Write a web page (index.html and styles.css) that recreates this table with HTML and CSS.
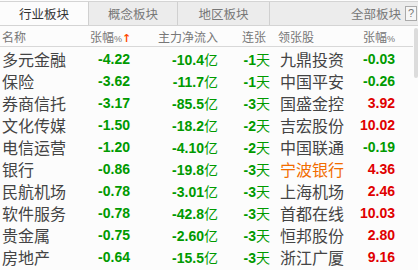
FILE: index.html
```html
<!DOCTYPE html>
<html lang="zh">
<head>
<meta charset="utf-8">
<link rel="stylesheet" href="styles.css">
</head>
<body>
<div class="panel">
  <div class="tabs">
    <div class="tab active">行业板块</div>
    <div class="tab">概念板块</div>
    <div class="tab">地区板块</div>
    <div class="tab-rest">
      <span class="all">全部板块</span>
      <span class="help">?</span>
    </div>
  </div>
  <div class="body">
    <div class="table">
      <div class="row head">
        <div class="c name">名称</div>
        <div class="c num">张幅<span class="pct">%</span><span class="arrow">↑</span></div>
        <div class="c num">主力净流入</div>
        <div class="c num days">连张</div>
        <div class="c lead">领张股</div>
        <div class="c num">张幅<span class="pct">%</span></div>
      </div>
      <div class="row"><div class="c name">多元金融</div><div class="c num g b">-4.22</div><div class="c num g"><b>-10.4</b>亿</div><div class="c num g days"><b>-1</b>天</div><div class="c lead">九鼎投资</div><div class="c num g b">-0.03</div></div>
      <div class="row"><div class="c name">保险</div><div class="c num g b">-3.62</div><div class="c num g"><b>-11.7</b>亿</div><div class="c num g days"><b>-1</b>天</div><div class="c lead">中国平安</div><div class="c num g b">-0.26</div></div>
      <div class="row"><div class="c name">券商信托</div><div class="c num g b">-3.17</div><div class="c num g"><b>-85.5</b>亿</div><div class="c num g days"><b>-3</b>天</div><div class="c lead">国盛金控</div><div class="c num r b">3.92</div></div>
      <div class="row"><div class="c name">文化传媒</div><div class="c num g b">-1.50</div><div class="c num g"><b>-18.2</b>亿</div><div class="c num g days"><b>-2</b>天</div><div class="c lead">吉宏股份</div><div class="c num r b">10.02</div></div>
      <div class="row"><div class="c name">电信运营</div><div class="c num g b">-1.20</div><div class="c num g"><b>-4.10</b>亿</div><div class="c num g days"><b>-2</b>天</div><div class="c lead">中国联通</div><div class="c num g b">-0.19</div></div>
      <div class="row"><div class="c name">银行</div><div class="c num g b">-0.86</div><div class="c num g"><b>-19.8</b>亿</div><div class="c num g days"><b>-3</b>天</div><div class="c lead o">宁波银行</div><div class="c num r b">4.36</div></div>
      <div class="row"><div class="c name">民航机场</div><div class="c num g b">-0.78</div><div class="c num g"><b>-3.01</b>亿</div><div class="c num g days"><b>-3</b>天</div><div class="c lead">上海机场</div><div class="c num r b">2.46</div></div>
      <div class="row"><div class="c name">软件服务</div><div class="c num g b">-0.78</div><div class="c num g"><b>-42.8</b>亿</div><div class="c num g days"><b>-3</b>天</div><div class="c lead">首都在线</div><div class="c num r b">10.03</div></div>
      <div class="row"><div class="c name">贵金属</div><div class="c num g b">-0.75</div><div class="c num g"><b>-2.60</b>亿</div><div class="c num g days"><b>-3</b>天</div><div class="c lead">恒邦股份</div><div class="c num r b">2.80</div></div>
      <div class="row"><div class="c name">房地产</div><div class="c num g b">-0.64</div><div class="c num g"><b>-15.5</b>亿</div><div class="c num g days"><b>-3</b>天</div><div class="c lead">浙江广厦</div><div class="c num r b">9.16</div></div>
    </div>
    <div class="scroll"><div class="thumb"></div></div>
  </div>
</div>
</body>
</html>
```

FILE: styles.css
```css
* { box-sizing: border-box; }
html, body { margin: 0; padding: 0; background: #fcfcfc; }
body {
  width: 418px;
  height: 270px;
  overflow: hidden;
  font-family: "Noto Sans CJK SC", "Liberation Sans", sans-serif;
}
.panel { width: 418px; }
.tabs {
  display: flex;
  height: 25px;
  border-top: 1px solid #d4d4d4;
  border-bottom: 1px solid #d4d4d4;
  background: #ececec;
  margin-top: 1px;
}
.tab {
  width: 89px;
  border-right: 1px solid #d0d0d0;
  font-size: 12.5px;
  line-height: 23px;
  text-align: center;
  color: #777;
}
.tab:nth-child(3) { width: 92px; }
.tab.active { background: #fcfcfc; color: #333; }
.tab-rest {
  flex: 1;
  display: flex;
  justify-content: flex-end;
  align-items: center;
  padding-right: 1px;
  gap: 4px;
}
.all { font-size: 12.5px; color: #777; line-height: 23px; }
.help {
  width: 12px;
  height: 15px;
  border: 1px solid #aaa;
  font-family: "Liberation Sans", sans-serif;
  font-size: 11px;
  line-height: 13px;
  text-align: center;
  color: #777;
  background: #f6f6f6;
}
.body { display: flex; }
.table { width: 413px; }
.scroll { width: 5px; padding-top: 2px; }
.thumb { width: 4px; height: 50px; margin-left: 1px; background: #dcdcdc; border-radius: 2px; }
.row {
  display: grid;
  grid-template-columns: 88px 40px 88px 52px 60px 65px;
  column-gap: 0;
  padding-left: 2px;
  height: 22px;
  align-items: center;
  color: #444;
}
.row.head {
  height: 21px;
  border-bottom: 1px solid #d8d8d8;
  margin-bottom: 0;
  font-size: 12px;
  color: #777;
}
.row.head .lead { padding-left: 8px; }
.row.head .days { padding-right: 4px; }
.pct { font-family: "Liberation Sans", sans-serif; font-size: 9px; }
.arrow { color: #ff4a00; font-family: "DejaVu Sans", sans-serif; font-size: 11px; font-weight: bold; }
.row:not(.head) .name, .row:not(.head) .lead { font-size: 16px; }
.row:not(.head) .lead { padding-left: 10px; white-space: nowrap; }
.num { text-align: right; white-space: nowrap; }
.row:not(.head) .num { font-size: 14px; }
.b, .num b { font-family: "Liberation Sans", sans-serif; font-weight: bold; }
.g { color: #009a00; }
.r { color: #e00000; }
.o { color: #f26c00; }
```
